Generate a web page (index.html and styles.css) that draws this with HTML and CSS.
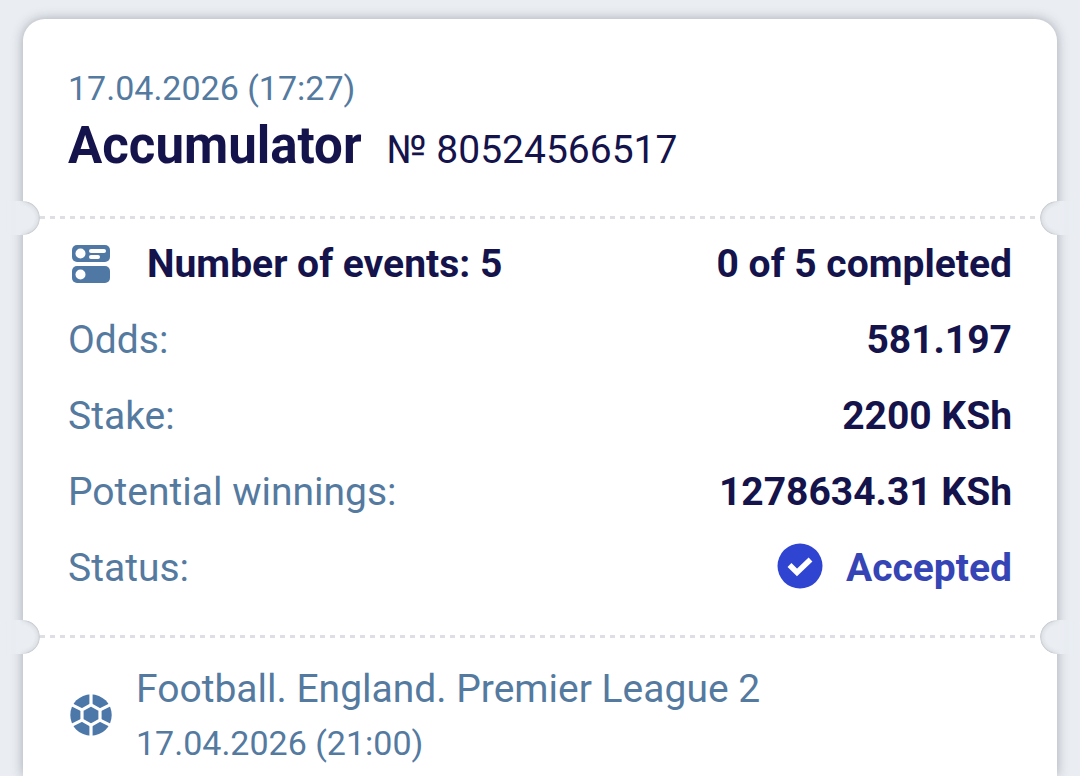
FILE: index.html
```html
<!DOCTYPE html>
<html lang="en">
<head>
<meta charset="UTF-8">
<meta name="viewport" content="width=device-width, initial-scale=1.0">
<title>Accumulator № 80524566517</title>
<link rel="stylesheet" href="styles.css">
</head>
<body>

<main class="ticket">
    <header class="ticket-header">
        <div class="date">17.04.2026 (17:27)</div>
        <div class="title-row">
            <h1 class="title">Accumulator</h1>
            <span class="number">№ 80524566517</span>
        </div>
    </header>

    <div class="divider"></div>

    <section class="summary">
        <div class="row row-events">
            <svg class="events-icon" width="38" height="38" viewBox="0 0 38 38" aria-hidden="true">
                <rect width="38" height="17" rx="5" fill="#5078a5"/>
                <rect y="21" width="38" height="17" rx="5" fill="#5078a5"/>
                <circle cx="8.500" cy="8.500" r="5" fill="#fff"/>
                <circle cx="8.500" cy="29.500" r="5" fill="#fff"/>
                <rect x="17" y="4" width="17" height="4" rx="2" fill="#fff"/>
                <rect x="17" y="10" width="11" height="4" rx="2" fill="#fff"/>
            </svg>
            <span class="events">Number of events: 5</span>
            <span class="value">0 of 5 completed</span>
        </div>
        <div class="row">
            <span class="label">Odds:</span>
            <span class="value">581.197</span>
        </div>
        <div class="row">
            <span class="label">Stake:</span>
            <span class="value">2200 KSh</span>
        </div>
        <div class="row">
            <span class="label">Potential winnings:</span>
            <span class="value">1278634.31 KSh</span>
        </div>
        <div class="row">
            <span class="label">Status:</span>
            <span class="value status">
                <svg class="status-icon" width="46" height="46" viewBox="0 0 46 46" aria-hidden="true">
                    <circle cx="23" cy="23" r="22.500" fill="#2f45d1"/>
                    <path d="M12.500 22l7.500 7.500 13.500-13" fill="none" stroke="#fff" stroke-width="5.500"/>
                </svg>
                Accepted
            </span>
        </div>
    </section>

    <div class="divider"></div>

    <section class="event">
        <svg class="ball-icon" width="42" height="42" viewBox="0 0 42 42" aria-hidden="true">
            <circle cx="21" cy="21" r="20.700" fill="#4c77a9"/>
            <g fill="none" stroke="#fff" stroke-width="3.200">
                <path d="M21 10.800l9 5.100v10.200l-9 5.100-9-5.100V15.900z"/>
                <path d="M21 0v11M21 31v11M30 15.900l10-5M12 15.900L2 10.900M30 26.100l10 5M12 26.100L2 31.100"/>
            </g>
        </svg>
        <div class="event-info">
            <div class="league">Football. England. Premier League 2</div>
            <div class="date">17.04.2026 (21:00)</div>
        </div>
    </section>
</main>

</body>
</html>
```

FILE: styles.css
```css
* {
    box-sizing: border-box;
}
body {
    display: flex;
    min-height: 100vh;
    margin: 0;
    padding: 19px 23px 0;
    background-color: #eaeef3;
    color: #15134b;
    font-family: Roboto, "Liberation Sans", sans-serif;
    font-size: 39px;
}
.ticket {
    flex: 1;
    background-color: #fff;
    border-radius: 22px 22px 0 0;
    box-shadow: 0 0 12px rgba(60, 65, 75, 0.4);
}
.ticket-header {
    padding: 49px 45px 40px;
}
.date {
    color: #557a9f;
    font-size: 34px;
    line-height: 40px;
}
.title-row {
    display: flex;
    align-items: baseline;
    gap: 25px;
    padding-top: 8px;
}
.title {
    margin: 0;
    font-size: 51px;
    font-weight: 700;
    line-height: 60px;
}

/* perforated line with a notch on each side */
.divider {
    position: relative;
    height: 3px;
    margin: 0 17px;
    background: repeating-linear-gradient(to right, #dddfe5 0 5px, transparent 5px 10px);
}
.divider::before,
.divider::after {
    content: "";
    position: absolute;
    top: -15px;
    width: 34px;
    height: 34px;
    background: radial-gradient(circle, #eaeef3 11px, #dfe2e7 15px, #c3c7cd 17px);
    border-radius: 0 17px 17px 0;
}
.divider::before {
    left: -34px;
    background: linear-gradient(to right, #eaeef3 40%, transparent 65%),
        radial-gradient(circle, #eaeef3 11px, #dfe2e7 15px, #c3c7cd 17px);
    mask-image: linear-gradient(to right, transparent, #000 12px);
}
.divider::after {
    right: -34px;
    background: linear-gradient(to left, #eaeef3 40%, transparent 65%),
        radial-gradient(circle, #eaeef3 11px, #dfe2e7 15px, #c3c7cd 17px);
    border-radius: 17px 0 0 17px;
    mask-image: linear-gradient(to left, transparent, #000 12px);
}

.summary {
    padding: 7px 45px 29px;
}
.row {
    display: flex;
    align-items: center;
    justify-content: space-between;
    height: 76px;
}
.events-icon {
    margin: 0 37px 0 4px;
}
.events {
    flex: 1;
    font-weight: 700;
}
.label,
.league {
    color: #557a9f;
}
.value {
    font-weight: 700;
}
.status {
    display: flex;
    align-items: center;
    gap: 23px;
    color: #3545b5;
}
.status-icon {
    margin-bottom: 4px;
}
.event {
    display: flex;
    align-items: center;
    gap: 24px;
    padding: 28px 47px 0;
}
.league {
    line-height: 46px;
}
.event-info .date {
    padding-top: 11px;
}
```
